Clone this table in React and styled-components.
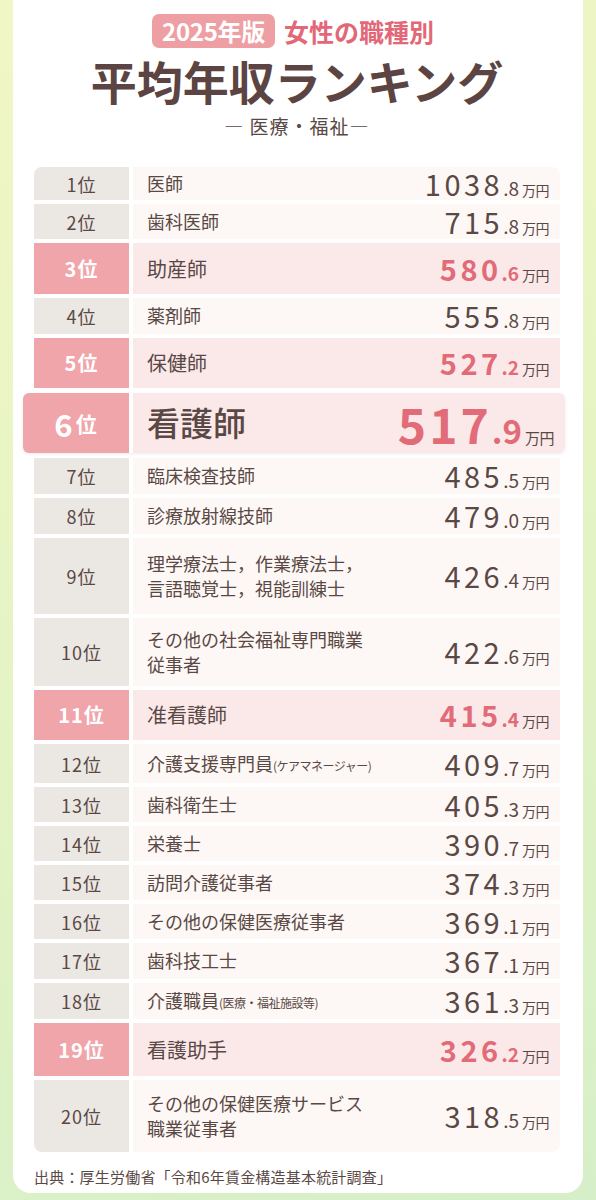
import React from 'react';
import styled, { createGlobalStyle, css } from 'styled-components';

const JP = `"Noto Sans CJK JP", "Noto Sans", sans-serif`;

const GlobalStyle = createGlobalStyle`
  html, body {
    margin: 0;
    padding: 0;
  }
  body {
    width: 596px;
    min-height: 1200px;
    background: linear-gradient(160deg, #f1f7c4 0%, #e6f4c3 45%, #d6efc8 100%);
    font-family: ${JP};
    color: #5a4845;
  }
`;

const Page = styled.div`
  width: 596px;
  height: 1200px;
  overflow: hidden;
  display: flex;
  justify-content: center;
`;

const Card = styled.div`
  width: 570px;
  height: 1193px;
  background: #ffffff;
  border-radius: 0 0 18px 18px;
  box-sizing: border-box;
  padding: 14px 23px 0 21px;
  display: flex;
  flex-direction: column;
`;

const Header = styled.header`
  display: flex;
  flex-direction: column;
  align-items: center;
`;

const Kicker = styled.div`
  display: flex;
  align-items: center;
  gap: 9px;
  margin-right: 8px;
`;

const Badge = styled.span`
  background: #ee9fa4;
  color: #ffffff;
  font-weight: 700;
  font-size: 24px;
  line-height: 34px;
  height: 34px;
  padding: 0 10px;
  border-radius: 7px;
  letter-spacing: -0.3px;
`;

const KickerText = styled.span`
  color: #e26878;
  font-weight: 700;
  font-size: 25px;
  line-height: 34px;
`;

const Title = styled.h1`
  margin: 6px 0 0;
  font-size: 46px;
  line-height: 52px;
  font-weight: 700;
  color: #5b4442;
  letter-spacing: 0;
`;

const Subtitle = styled.div`
  margin-top: 8px;
  font-size: 19px;
  line-height: 24px;
  color: #5a4845;
  letter-spacing: 1px;
`;

const Table = styled.div`
  margin-top: 29px;
  display: flex;
  flex-direction: column;
  gap: 4px;
`;

const Row = styled.div`
  display: grid;
  grid-template-columns: 95px 1fr;
  grid-template-rows: minmax(0, 1fr);
  gap: 4px;
  height: ${p => p.$h}px;
  ${p => p.$top && css`
    grid-template-columns: 106px 1fr;
    margin: 1px -5px 1px -11px;
    border-radius: 6px;
    box-shadow: 0 1px 3px rgba(150, 90, 90, 0.12);
  `}
`;

const RankCell = styled.div`
  display: flex;
  align-items: center;
  justify-content: center;
  background: ${p => (p.$hl ? '#f0a5aa' : '#ebe7e3')};
  color: ${p => (p.$hl ? '#ffffff' : '#5a4845')};
  font-size: ${p => (p.$hl ? 20 : 18)}px;
  font-weight: ${p => (p.$hl ? 700 : 400)};
  letter-spacing: 1px;
  line-height: 1;
  border-top-left-radius: ${p => (p.$first ? 8 : p.$top ? 6 : 0)}px;
  border-bottom-left-radius: ${p => (p.$last ? 8 : p.$top ? 6 : 0)}px;
`;

const BigNum = styled.span`
  font-size: 31px;
  font-weight: 700;
  margin-right: 2px;
`;

const BigPos = styled.span`
  font-size: 21px;
  font-weight: 700;
`;

const NameCell = styled.div`
  display: flex;
  align-items: center;
  justify-content: space-between;
  padding: 0 11px 0 14px;
  background: ${p => (p.$hl ? '#fbe9ea' : '#fdf8f5')};
  border-top-right-radius: ${p => (p.$first ? 8 : p.$top ? 6 : 0)}px;
  border-bottom-right-radius: ${p => (p.$last ? 8 : p.$top ? 6 : 0)}px;
`;

const Name = styled.div`
  font-size: ${p => (p.$top ? 33 : p.$hl ? 20 : 18)}px;
  line-height: ${p => (p.$top ? 1.2 : 1.4)};
  font-weight: ${p => (p.$top ? 500 : 400)};
  color: #5a4845;
  white-space: nowrap;
`;

const Small = styled.span`
  font-size: 12px;
  letter-spacing: -0.5px;
`;

const Value = styled.div`
  display: flex;
  align-items: baseline;
  white-space: nowrap;
  line-height: 1.1;
  color: ${p => (p.$hl ? '#e26b78' : '#5a4845')};
`;

const Int = styled.span`
  font-size: ${p => (p.$top ? 48 : 29)}px;
  font-weight: ${p => (p.$hl ? 700 : 400)};
  letter-spacing: ${p => (p.$top ? 3 : 3.5)}px;
`;

const Dec = styled.span`
  font-size: ${p => (p.$top ? 33 : 19)}px;
  font-weight: ${p => (p.$hl ? 700 : 400)};
  margin-right: 3px;
`;

const Unit = styled.span`
  font-size: ${p => (p.$top ? 15 : 14)}px;
  color: #5a4845;
  letter-spacing: -0.5px;
`;

const Source = styled.div`
  margin-top: 14px;
  font-size: 15px;
  color: #5a4845;
  letter-spacing: 0.2px;
`;

const rows = [
  { rank: 1, name: '医師', int: '1038', dec: '.8', h: 33 },
  { rank: 2, name: '歯科医師', int: '715', dec: '.8', h: 35 },
  { rank: 3, name: '助産師', int: '580', dec: '.6', h: 51, hl: true },
  { rank: 4, name: '薬剤師', int: '555', dec: '.8', h: 36 },
  { rank: 5, name: '保健師', int: '527', dec: '.2', h: 50, hl: true },
  { rank: 6, name: '看護師', int: '517', dec: '.9', h: 60, hl: true, top: true },
  { rank: 7, name: '臨床検査技師', int: '485', dec: '.5', h: 36 },
  { rank: 8, name: '診療放射線技師', int: '479', dec: '.0', h: 36 },
  { rank: 9, name: ['理学療法士，作業療法士，', '言語聴覚士，視能訓練士'], int: '426', dec: '.4', h: 76 },
  { rank: 10, name: ['その他の社会福祉専門職業', '従事者'], int: '422', dec: '.6', h: 68 },
  { rank: 11, name: '准看護師', int: '415', dec: '.4', h: 50, hl: true },
  { rank: 12, name: '介護支援専門員', small: '(ケアマネージャー)', int: '409', dec: '.7', h: 39 },
  { rank: 13, name: '歯科衛生士', int: '405', dec: '.3', h: 35 },
  { rank: 14, name: '栄養士', int: '390', dec: '.7', h: 35 },
  { rank: 15, name: '訪問介護従事者', int: '374', dec: '.3', h: 35 },
  { rank: 16, name: 'その他の保健医療従事者', int: '369', dec: '.1', h: 35 },
  { rank: 17, name: '歯科技工士', int: '367', dec: '.1', h: 36 },
  { rank: 18, name: '介護職員', small: '(医療・福祉施設等)', int: '361', dec: '.3', h: 36 },
  { rank: 19, name: '看護助手', int: '326', dec: '.2', h: 53, hl: true },
  { rank: 20, name: ['その他の保健医療サービス', '職業従事者'], int: '318', dec: '.5', h: 72 },
];

const RankingRow = ({ row, first, last }) => {
  const lines = Array.isArray(row.name) ? row.name : [row.name];
  return (
    <Row $h={row.h} $top={row.top}>
      <RankCell $hl={row.hl} $top={row.top} $first={first} $last={last}>
        {row.top ? (
          <>
            <BigNum>{row.rank}</BigNum>
            <BigPos>位</BigPos>
          </>
        ) : (
          `${row.rank}位`
        )}
      </RankCell>
      <NameCell $hl={row.hl} $top={row.top} $first={first} $last={last}>
        <Name $hl={row.hl} $top={row.top}>
          {lines.map((l, i) => (
            <div key={i}>
              {l}
              {row.small && <Small>{row.small}</Small>}
            </div>
          ))}
        </Name>
        <Value $hl={row.hl}>
          <Int $hl={row.hl} $top={row.top}>{row.int}</Int>
          <Dec $hl={row.hl} $top={row.top}>{row.dec}</Dec>
          <Unit $top={row.top}>万円</Unit>
        </Value>
      </NameCell>
    </Row>
  );
};

const App = () => {
  return (
    <Page>
      <GlobalStyle />
      <Card>
        <Header>
          <Kicker>
            <Badge>2025年版</Badge>
            <KickerText>女性の職種別</KickerText>
          </Kicker>
          <Title>平均年収ランキング</Title>
          <Subtitle>― 医療・福祉―</Subtitle>
        </Header>
        <Table>
          {rows.map((row, i) => (
            <RankingRow key={row.rank} row={row} first={i === 0} last={i === rows.length - 1} />
          ))}
        </Table>
        <Source>出典：厚生労働省「令和6年賃金構造基本統計調査」</Source>
      </Card>
    </Page>
  );
};

export default App;
